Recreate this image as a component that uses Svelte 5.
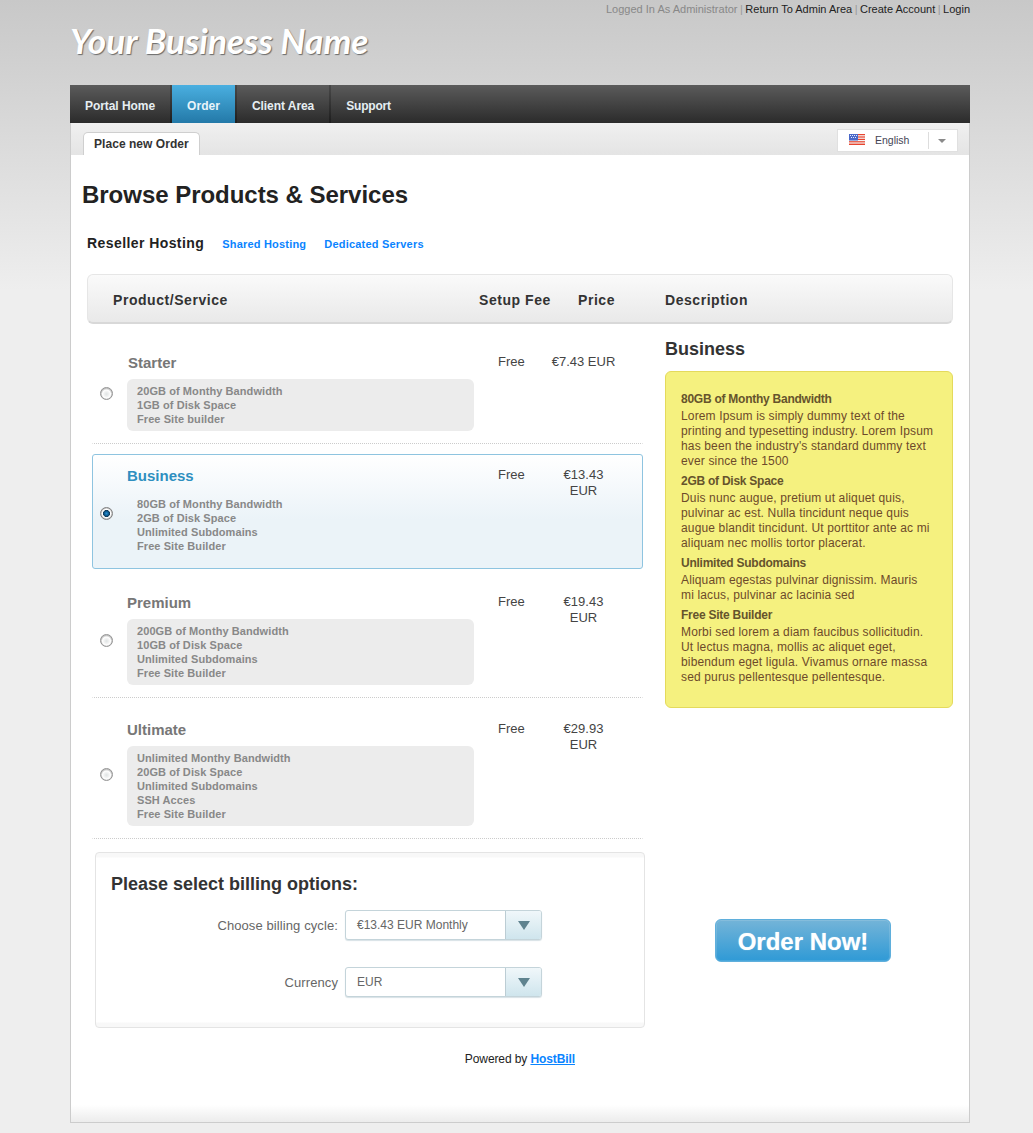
<script>
  const plans = [
    { name: 'Starter', free: 'Free', price: '€7.43 EUR', cls: 'first', features: ['20GB of Monthy Bandwidth', '1GB of Disk Space', 'Free Site builder'] },
    { name: 'Business', free: 'Free', price: '€13.43 EUR', cls: 'active', features: ['80GB of Monthy Bandwidth', '2GB of Disk Space', 'Unlimited Subdomains', 'Free Site Builder'] },
    { name: 'Premium', free: 'Free', price: '€19.43 EUR', cls: '', features: ['200GB of Monthy Bandwidth', '10GB of Disk Space', 'Unlimited Subdomains', 'Free Site Builder'] },
    { name: 'Ultimate', free: 'Free', price: '€29.93 EUR', cls: '', features: ['Unlimited Monthy Bandwidth', '20GB of Disk Space', 'Unlimited Subdomains', 'SSH Acces', 'Free Site Builder'] }
  ];
  const details = [
    ['80GB of Monthy Bandwidth', ['Lorem Ipsum is simply dummy text of the', 'printing and typesetting industry. Lorem Ipsum', "has been the industry's standard dummy text", 'ever since the 1500']],
    ['2GB of Disk Space', ['Duis nunc augue, pretium ut aliquet quis,', 'pulvinar ac est. Nulla tincidunt neque quis', 'augue blandit tincidunt. Ut porttitor ante ac mi', 'aliquam nec mollis tortor placerat.']],
    ['Unlimited Subdomains', ['Aliquam egestas pulvinar dignissim. Mauris', 'mi lacus, pulvinar ac lacinia sed']],
    ['Free Site Builder', ['Morbi sed lorem a diam faucibus sollicitudin.', 'Ut lectus magna, mollis ac aliquet eget,', 'bibendum eget ligula. Vivamus ornare massa', 'sed purus pellentesque pellentesque.']]
  ];
  const selects = [
    { label: 'Choose billing cycle:', value: '€13.43 EUR Monthly' },
    { label: 'Currency', value: 'EUR' }
  ];
</script>

<div class="wrap">
  <header>
    <div class="toplinks">
      <span class="who">Logged In As Administrator</span>
      <span class="sep">|</span><a href="#a">Return To Admin Area</a>
      <span class="sep">|</span><a href="#b">Create Account</a>
      <span class="sep">|</span><a href="#c">Login</a>
    </div>
    <div class="logo">Your Business Name</div>
  </header>

  <nav>
    <a href="#h">Portal Home</a>
    <a href="#o" class="on">Order</a>
    <a href="#ca">Client Area</a>
    <a href="#s" class="last">Support</a>
  </nav>

  <main>
    <div class="tabbar">
      <div class="tab">Place new Order</div>
      <div class="lang">
        <svg class="flag" width="16" height="11" viewBox="0 0 16 11">
          <rect width="16" height="11" fill="#f4f4f4" />
          <g fill="#e8452f">
            <rect width="16" height="1.2" />
            <rect y="2.4" width="16" height="1.2" />
            <rect y="4.8" width="16" height="1.2" />
            <rect y="7.2" width="16" height="1.2" />
            <rect y="9.6" width="16" height="1.4" />
          </g>
          <rect width="9" height="6.5" fill="#4a68c8" />
          <g fill="#e6ecff">
            <rect x="1" y="1" width="1" height="1" />
            <rect x="3" y="1" width="1" height="1" />
            <rect x="5" y="1" width="1" height="1" />
            <rect x="7" y="1" width="1" height="1" />
            <rect x="2" y="3" width="1" height="1" />
            <rect x="4" y="3" width="1" height="1" />
            <rect x="6" y="3" width="1" height="1" />
          </g>
        </svg>
        <span class="langname">English</span>
        <span class="langdiv"></span>
        <span class="langarrow"></span>
      </div>
    </div>

    <h1>Browse Products &amp; Services</h1>

    <div class="cats">
      <strong>Reseller Hosting</strong>
      <a href="#sh">Shared Hosting</a>
      <a href="#ds">Dedicated Servers</a>
    </div>

    <div class="thead">
      <span>Product/Service</span>
      <span>Setup Fee</span>
      <span>Price</span>
      <span>Description</span>
    </div>

    <div class="columns">
      <div class="left">
        {#each plans as p}
          <div class="row {p.cls}">
            <span class="radio"></span>
            <div class="info">
              <div class="name">{p.name}</div>
              <div class="features">
                {#each p.features as f}<div>{f}</div>{/each}
              </div>
            </div>
            <div class="fee">{p.free}</div>
            <div class="price">{p.price}</div>
          </div>
        {/each}

        <div class="billing">
          <h2>Please select billing options:</h2>
          {#each selects as s}
            <div class="field">
              <label for={s.label}>{s.label}</label>
              <div class="select" id={s.label}>
                <span class="val">{s.value}</span>
                <span class="btn"><i></i></span>
              </div>
            </div>
          {/each}
        </div>

        <div class="powered">Powered by <a href="#hb">HostBill</a></div>
      </div>

      <aside>
        <h3>Business</h3>
        <div class="desc">
          {#each details as d}
            <b>{d[0]}</b>
            <p>{#each d[1] as line}<span>{line}</span>{/each}</p>
          {/each}
        </div>
        <button class="order">Order Now!</button>
      </aside>
    </div>

    <div class="bottom"></div>
  </main>
</div>

<style>
  :global(body) {
    margin: 0;
    background: #eeeeee linear-gradient(#c8c8c8 0, #eeeeee 290px) no-repeat;
    font-family: "Liberation Sans", Arial, sans-serif;
  }
  .wrap {
    width: 900px;
    margin-left: 70px;
    padding-bottom: 10px;
  }
  header {
    height: 85px;
  }
  .toplinks {
    display: flex;
    justify-content: flex-end;
    gap: 2.5px;
    height: 18px;
    line-height: 18px;
    font-size: 11px;
    color: #222;
  }
  .toplinks a {
    color: #222;
    text-decoration: none;
  }
  .who { color: #888; }
  .sep { color: #999; }
  .logo {
    margin-top: 1px;
    font-family: Lato, sans-serif;
    font-weight: 700;
    font-style: italic;
    font-size: 35.2px;
    line-height: 42px;
    color: #fff;
    text-shadow: 1px 1px 1px #6a6a6a;
  }
  nav {
    display: flex;
    height: 38px;
    background: linear-gradient(#5b5b5b, #2b2b2b);
  }
  nav a {
    padding: 0 15px;
    line-height: 42px;
    font-size: 12px;
    font-weight: 700;
    letter-spacing: -0.06px;
    color: #e6eef2;
    text-decoration: none;
    border-right: 2px solid #222;
    border-image: linear-gradient(#4a4a4a, #1c1c1c) 1;
  }
  nav a.on {
    background: linear-gradient(#4aafe0, #2379a8);
    color: #e8f4fa;
    letter-spacing: 0.05px;
  }
  nav a.last {
    border-right: 0;
    letter-spacing: -0.2px;
  }
  main {
    background: #fff;
    border: 1px solid #cccccc;
    border-top: 0;
  }
  .tabbar {
    height: 32px;
    display: flex;
    justify-content: space-between;
    align-items: flex-end;
    padding: 0 11px 0 12px;
    background: linear-gradient(#f0f0f0, #e4e4e4);
  }
  .tab {
    height: 22px;
    line-height: 23px;
    padding: 0 10px;
    background: #fff;
    border: 1px solid #cfcfcf;
    border-bottom: 0;
    border-radius: 5px 5px 0 0;
    font-size: 12px;
    font-weight: 700;
    letter-spacing: 0.05px;
    color: #333;
  }
  .lang {
    display: flex;
    align-items: center;
    align-self: flex-start;
    box-sizing: border-box;
    width: 121px;
    height: 23px;
    margin-top: 6px;
    background: #fff;
    border: 1px solid #e0e0e0;
    padding-left: 11px;
  }
  .flag { display: block; margin-top: -2px; }
  .langname {
    margin-left: 10px;
    margin-top: -1px;
    width: 53px;
    font-size: 10.5px;
    color: #445;
  }
  .langdiv {
    width: 1px;
    height: 17px;
    background: #dddddd;
  }
  .langarrow {
    margin-left: 9px;
    width: 0;
    height: 0;
    border: 4px solid transparent;
    border-top: 4px solid #8a8a8a;
    border-bottom: 0;
  }
  h1 {
    margin: 26px 0 0 11px;
    font-size: 24px;
    line-height: 28px;
    font-weight: 700;
    letter-spacing: -0.03px;
    color: #222;
  }
  .cats {
    display: flex;
    align-items: center;
    height: 20px;
    margin: 24px 0 0 16px;
    gap: 18px;
  }
  .cats strong {
    font-size: 14px;
    letter-spacing: 0.42px;
    color: #222;
  }
  .cats a {
    font-size: 11px;
    font-weight: 700;
    letter-spacing: 0.2px;
    color: #0a84ff;
    text-decoration: none;
    padding-top: 1px;
  }
  .thead {
    display: grid;
    grid-template-columns: 366px 99px 87px 1fr;
    box-sizing: border-box;
    align-items: center;
    height: 50px;
    margin: 21px 16px 0 16px;
    padding: 2px 0 0 25px;
    border: 1px solid #e6e6e6;
    border-bottom: 2px solid #d8d8d8;
    border-radius: 6px;
    background: linear-gradient(#fafafa, #e9e9e9);
    font-size: 14px;
    font-weight: 700;
    letter-spacing: 0.55px;
    color: #333;
  }
  .columns {
    display: flex;
    margin: 0 16px 0 21px;
  }
  .left {
    width: 573px;
    flex: none;
    padding-top: 17px;
  }
  .row {
    display: grid;
    grid-template-columns: 34px 371px 52.5px 66px;
    align-items: start;
    box-sizing: border-box;
    width: 551px;
    margin-bottom: 10px;
    padding-top: 12px;
    padding-bottom: 12px;
    border: 1px solid transparent;
    border-bottom: 1px dotted #cccccc;
    font-size: 13px;
    line-height: 16px;
    color: #444;
  }
  .row.active {
    border: 1px solid #8ec4e0;
    border-radius: 3px;
    background: linear-gradient(#ffffff 0, #ebf3f8 57%, #ebf3f8 100%);
    padding-bottom: 10px;
    margin-bottom: 12px;
  }
  .radio {
    align-self: center;
    margin: 1px 0 0 6.5px;
    width: 13px;
    height: 13px;
    box-sizing: border-box;
    border-radius: 50%;
    border: 1px solid #949494;
    background: radial-gradient(circle at 50% 55%, #dfe3e3 0, #f6f6f6 3px, #ffffff 4px, #c4c4c4 5.5px);
  }
  .active .radio {
    background: radial-gradient(circle, #2a90d0 0, #0f5f96 2px, #123a58 3.2px, #ffffff 3.8px, #ffffff 4.2px, #bcbcbc 5.5px);
    border-color: #808080;
  }
  .info { min-width: 0; margin-right: 24px; }
  .name {
    font-size: 15px;
    line-height: 18px;
    font-weight: 700;
    color: #777;
  }
  .first .name { margin-left: 1px; }
  .active .name { color: #2e8fc0; }
  .features {
    margin-top: 7px;
    padding: 5px 10px;
    border-radius: 6px;
    background: #ececec;
    font-size: 11px;
    line-height: 14px;
    font-weight: 700;
    letter-spacing: 0.08px;
    color: #888;
  }
  .active .features { background: transparent; }
  .price { text-align: center; }
  .billing {
    box-sizing: border-box;
    width: 550px;
    height: 176px;
    margin: 13px 0 0 3px;
    padding: 21px 15px 0;
    border: 1px solid #e4e4e4;
    border-radius: 4px;
    background: linear-gradient(#f8f8f8 0, #f8f8f8 4px, #fff 5px, #fff calc(100% - 5px), #f8f8f8 calc(100% - 4px));
  }
  h2 {
    margin: 0 0 16px;
    font-size: 18px;
    line-height: 20px;
    font-weight: 700;
    color: #333;
  }
  .field {
    display: flex;
    align-items: center;
    gap: 7px;
    height: 30px;
    margin-bottom: 27px;
  }
  label {
    width: 227px;
    text-align: right;
    font-size: 13px;
    letter-spacing: 0.1px;
    color: #666;
  }
  .select {
    display: flex;
    box-sizing: border-box;
    width: 197px;
    height: 30px;
    border: 1px solid #c4d4da;
    border-radius: 3px;
    background: #fff;
    box-shadow: 0 1px 1px #d8e2e6;
    overflow: hidden;
  }
  .val {
    flex: 1;
    padding-left: 11px;
    line-height: 29px;
    font-size: 12px;
    color: #666;
  }
  .btn {
    display: flex;
    align-items: center;
    justify-content: center;
    width: 35px;
    border-left: 1px solid #bccdd4;
    background: linear-gradient(#f0f7fa, #cfe5ed);
  }
  .btn i {
    width: 0;
    height: 0;
    border: 6.5px solid transparent;
    border-top: 9px solid #5f838f;
    border-bottom: 0;
  }
  .powered {
    margin: 23px 0 0;
    width: 483px;
    text-align: right;
    font-size: 12px;
    line-height: 16px;
    letter-spacing: -0.1px;
    color: #222;
  }
  .powered a {
    color: #0a84ff;
    font-weight: 700;
    text-decoration: underline;
  }
  aside { flex: 1; min-width: 0; }
  h3 {
    margin: 14px 0 0;
    font-size: 18px;
    line-height: 22px;
    font-weight: 700;
    color: #333;
  }
  .desc {
    box-sizing: border-box;
    height: 337px;
    margin-top: 11px;
    padding: 20px 0 0 15px;
    border: 1px solid #e4da5c;
    border-radius: 6px;
    background: #f5f17f;
    font-size: 12px;
    line-height: 15px;
    letter-spacing: 0.15px;
    color: #6d4a2a;
  }
  .desc b {
    display: block;
    margin-bottom: 2px;
    letter-spacing: -0.25px;
    color: #66542c;
  }
  .desc p { margin: 0 0 5px; }
  .desc span { display: block; white-space: nowrap; }
  .order {
    display: block;
    box-sizing: border-box;
    width: 176px;
    height: 43px;
    margin: 211px 0 0 50px;
    padding: 2px 0 0;
    border: 1px solid #5fafdc;
    border-radius: 6px;
    background: linear-gradient(#74b4d8, #2f9ad6);
    box-shadow: inset 0 0 0 1px rgba(255, 255, 255, 0.12);
    font-family: "Liberation Sans", Arial, sans-serif;
    font-size: 24px;
    font-weight: 700;
    color: #fff;
    text-shadow: 0 0 1px rgba(255, 255, 255, 0.6);
  }
  .bottom {
    height: 17px;
    margin-top: 38px;
    background: linear-gradient(#fff, #ececec);
  }
</style>
